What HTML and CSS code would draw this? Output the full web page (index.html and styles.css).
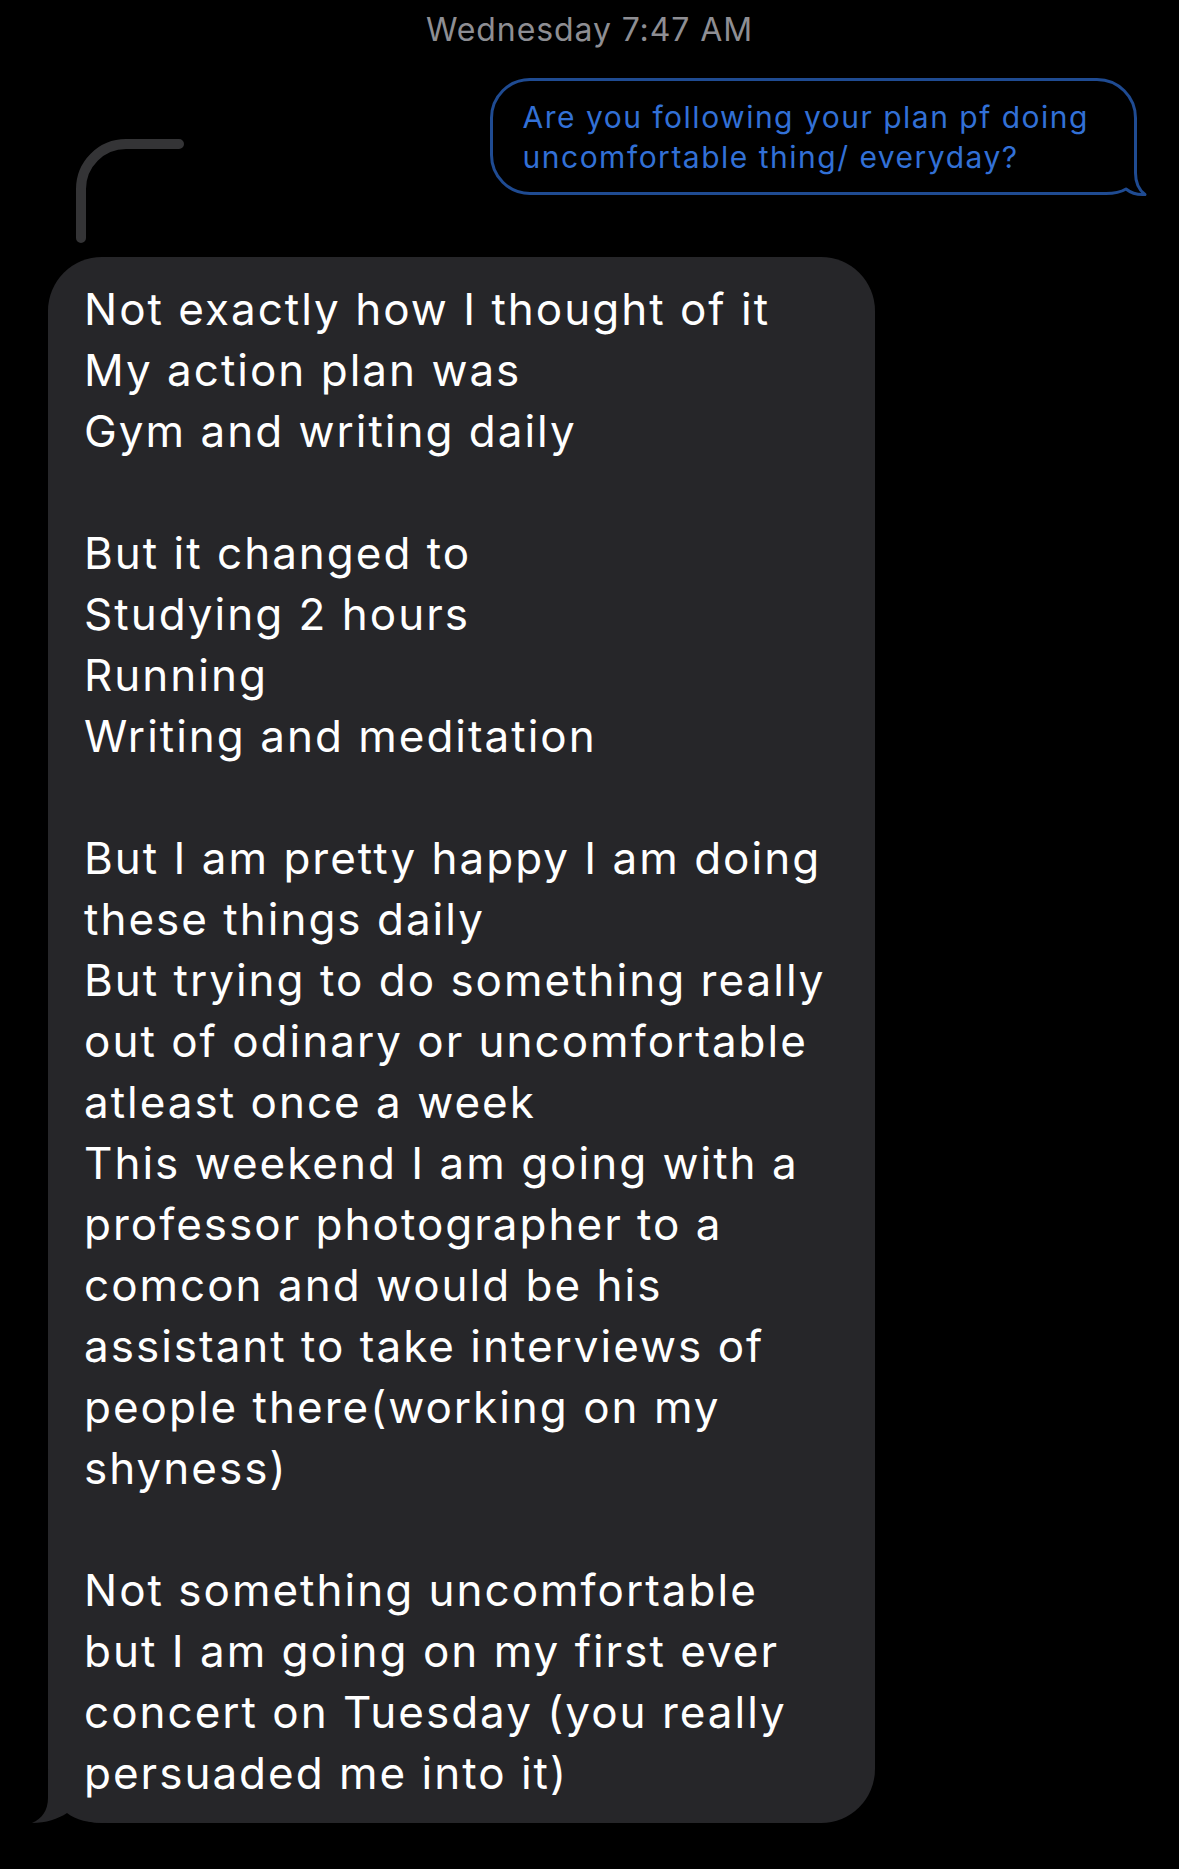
FILE: index.html
```html
<!DOCTYPE html>
<html>
<head>
<meta charset="utf-8">
<link rel="stylesheet" href="styles.css">
</head>
<body>
<div class="screen">
  <div class="time">Wednesday 7:47 AM</div>
  <div class="sent-row">
    <div class="sent">
      <div class="sent-text">Are you following your plan pf doing<br>uncomfortable thing/ everyday?</div>
      <svg class="sent-tail" width="60" height="52" viewBox="0 0 60 52">
        <path d="M45.5 0 V28 C45.5 38 49 45 55 49.5 C48 50 41 48 36 44 C31 47 24 48.5 16 48.5 H0 V0 Z" fill="#000"/>
        <path d="M45.5 0 V28 C45.5 38 49 45 55 49.5 C48 50 41 48 36 44 C31 47 24 48.5 16 48.5 H0" fill="none" stroke="#1f4b92" stroke-width="3" stroke-linejoin="round"/>
      </svg>
    </div>
  </div>
  <div class="thread">
    <svg width="120" height="120" viewBox="0 0 120 120">
      <path d="M5 101 V52 A45 45 0 0 1 50 7 H103" fill="none" stroke="#343436" stroke-width="10" stroke-linecap="round"/>
    </svg>
  </div>
  <div class="recv">
    <svg class="recv-tail" width="82" height="55" viewBox="0 0 82 55">
      <path d="M20 0 V28 C20 40 14 49 4 53 C18 53 30 49 39 43 C48 50 60 53 80 53 H82 V0 Z" fill="#262629"/>
    </svg>
    <div class="line">Not exactly how I thought of it</div>
    <div class="line">My action plan was</div>
    <div class="line">Gym and writing daily</div>
    <div class="line blank"></div>
    <div class="line">But it changed to</div>
    <div class="line">Studying 2 hours</div>
    <div class="line">Running</div>
    <div class="line">Writing and meditation</div>
    <div class="line blank"></div>
    <div class="line">But I am pretty happy I am doing</div>
    <div class="line">these things daily</div>
    <div class="line">But trying to do something really</div>
    <div class="line">out of odinary or uncomfortable</div>
    <div class="line">atleast once a week</div>
    <div class="line">This weekend I am going with a</div>
    <div class="line">professor photographer to a</div>
    <div class="line">comcon and would be his</div>
    <div class="line">assistant to take interviews of</div>
    <div class="line">people there(working on my</div>
    <div class="line">shyness)</div>
    <div class="line blank"></div>
    <div class="line">Not something uncomfortable</div>
    <div class="line">but I am going on my first ever</div>
    <div class="line">concert on Tuesday (you really</div>
    <div class="line">persuaded me into it)</div>
  </div>
</div>
</body>
</html>
```

FILE: styles.css
```css
html, body {
  margin: 0;
  padding: 0;
  background: #000;
}

.screen {
  width: 1179px;
  height: 1869px;
  background: #000;
  font-family: Inter, "Noto Sans", "Liberation Sans", sans-serif;
  display: flex;
  flex-direction: column;
  overflow: hidden;
}

.time {
  height: 60px;
  line-height: 60px;
  text-align: center;
  color: #8e8e93;
  font-size: 32px;
  letter-spacing: 0.9px;
}

.sent-row {
  display: flex;
  justify-content: flex-end;
  padding-right: 42px;
  margin-top: 18px;
}

.sent {
  position: relative;
  border: 3px solid #1f4b92;
  border-radius: 40px;
  padding: 16px 45px 15px 30px;
}

.sent-text {
  color: #3270d6;
  font-size: 30px;
  line-height: 40px;
  letter-spacing: 1.5px;
  white-space: nowrap;
}

.sent-tail {
  position: absolute;
  right: -16px;
  bottom: -5px;
  display: block;
}

.thread {
  margin-top: -58px;
  padding-left: 76px;
  height: 120px;
}

.thread svg {
  display: block;
}

.recv {
  position: relative;
  margin-left: 48px;
  width: 827px;
  box-sizing: border-box;
  background: #262629;
  border-radius: 54px;
  padding: 22px 20px 19px 36px;
}

.line {
  position: relative;
  color: #ffffff;
  font-size: 44px;
  line-height: 61px;
  height: 61px;
  letter-spacing: 2px;
  white-space: nowrap;
}

.recv-tail {
  position: absolute;
  left: -20px;
  bottom: -2px;
  display: block;
}
```
